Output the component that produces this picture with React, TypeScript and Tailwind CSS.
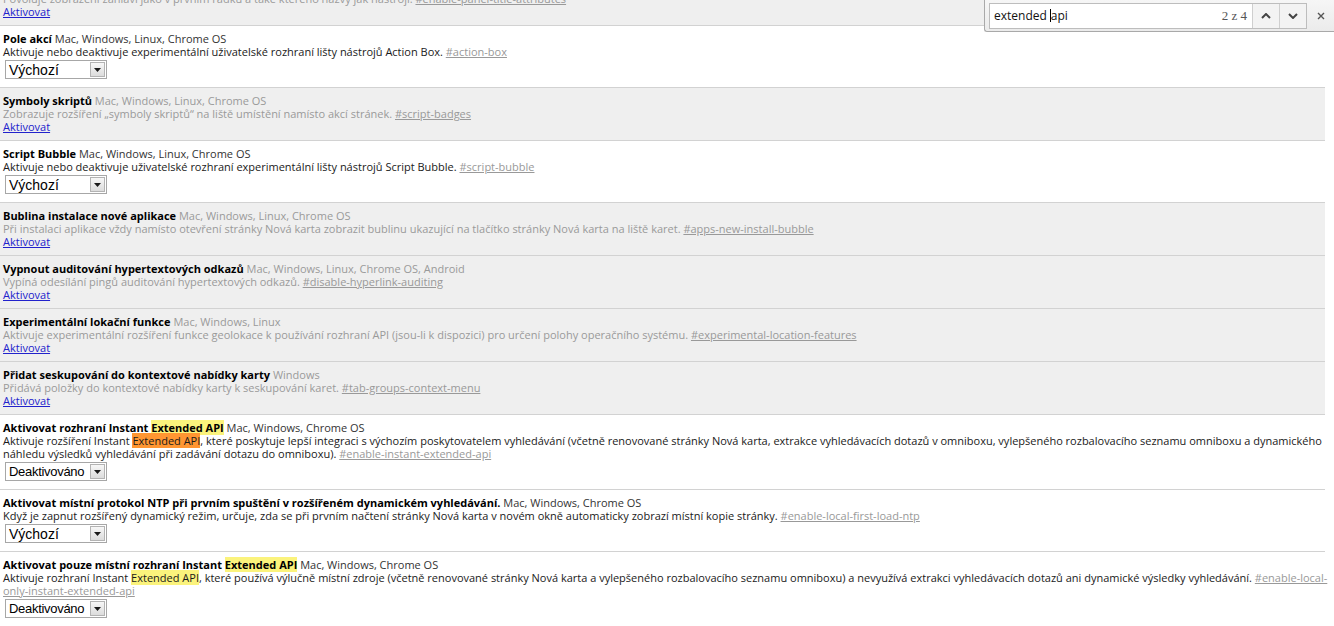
import type { ReactNode } from 'react';

type Flag = {
  title: ReactNode;
  platforms: string;
  desc: ReactNode;
  enabled: boolean;
  select?: string;
  nowrap?: boolean;
};

function Hl({ children, active }: { children: ReactNode; active?: boolean }) {
  return <span className={active ? 'bg-[#ff9632]' : 'bg-[#fbf37c]'}>{children}</span>;
}

function Hash({ children }: { children: ReactNode }) {
  return <span className="text-[#999] underline">{children}</span>;
}

function Select({ value, narrow }: { value: string; narrow?: boolean }) {
  return (
    <div className="ml-[2px] mt-[2px] mb-[2px] flex h-[19px] w-[102px] items-center border border-[#a7a7a7] bg-white">
      <span
        className={`flex-1 pl-[3px] leading-none text-black font-['Liberation_Sans',Arial,sans-serif] ${
          narrow ? 'text-[13px] tracking-[-0.3px]' : 'text-[14px]'
        }`}
      >
        {value}
      </span>
      <span className="mr-[1px] flex h-[15px] w-[15px] items-center justify-center border border-[#b3b3b3] bg-gradient-to-b from-[#f7f7f7] to-[#dcdcdc]">
        <svg width="7" height="4" viewBox="0 0 7 4">
          <path d="M0 0h7L3.5 4z" fill="#1a1a1a" />
        </svg>
      </span>
    </div>
  );
}

const flags: Flag[] = [
  {
    title: 'Pole akcí',
    platforms: 'Mac, Windows, Linux, Chrome OS',
    desc: (
      <>
        Aktivuje nebo deaktivuje experimentální uživatelské rozhraní lišty nástrojů Action Box.{' '}
        <Hash>#action-box</Hash>
      </>
    ),
    enabled: true,
    select: 'Výchozí',
  },
  {
    title: 'Symboly skriptů',
    platforms: 'Mac, Windows, Linux, Chrome OS',
    desc: (
      <>
        Zobrazuje rozšíření „symboly skriptů“ na liště umístění namísto akcí stránek. <Hash>#script-badges</Hash>
      </>
    ),
    enabled: false,
  },
  {
    title: 'Script Bubble',
    platforms: 'Mac, Windows, Linux, Chrome OS',
    desc: (
      <>
        Aktivuje nebo deaktivuje uživatelské rozhraní experimentální lišty nástrojů Script Bubble.{' '}
        <Hash>#script-bubble</Hash>
      </>
    ),
    enabled: true,
    select: 'Výchozí',
  },
  {
    title: 'Bublina instalace nové aplikace',
    platforms: 'Mac, Windows, Linux, Chrome OS',
    desc: (
      <>
        Při instalaci aplikace vždy namísto otevření stránky Nová karta zobrazit bublinu ukazující na tlačítko
        stránky Nová karta na liště karet. <Hash>#apps-new-install-bubble</Hash>
      </>
    ),
    enabled: false,
  },
  {
    title: 'Vypnout auditování hypertextových odkazů',
    platforms: 'Mac, Windows, Linux, Chrome OS, Android',
    desc: (
      <>
        Vypíná odesílání pingů auditování hypertextových odkazů. <Hash>#disable-hyperlink-auditing</Hash>
      </>
    ),
    enabled: false,
  },
  {
    title: 'Experimentální lokační funkce',
    platforms: 'Mac, Windows, Linux',
    desc: (
      <>
        Aktivuje experimentální rozšíření funkce geolokace k používání rozhraní API (jsou-li k dispozici) pro
        určení polohy operačního systému. <Hash>#experimental-location-features</Hash>
      </>
    ),
    enabled: false,
  },
  {
    title: 'Přidat seskupování do kontextové nabídky karty',
    platforms: 'Windows',
    desc: (
      <>
        Přidává položky do kontextové nabídky karty k seskupování karet. <Hash>#tab-groups-context-menu</Hash>
      </>
    ),
    enabled: false,
  },
  {
    title: (
      <>
        Aktivovat rozhraní Instant <Hl>Extended API</Hl>
      </>
    ),
    platforms: 'Mac, Windows, Chrome OS',
    desc: (
      <>
        Aktivuje rozšíření Instant <Hl active>Extended API</Hl>, které poskytuje lepší integraci s výchozím
        poskytovatelem vyhledávání (včetně renovované stránky Nová karta, extrakce vyhledávacích dotazů v
        omniboxu, vylepšeného rozbalovacího seznamu omniboxu a dynamického
        <br />
        náhledu výsledků vyhledávání při zadávání dotazu do omniboxu). <Hash>#enable-instant-extended-api</Hash>
      </>
    ),
    enabled: true,
    select: 'Deaktivováno',
    nowrap: true,
  },
  {
    title: 'Aktivovat místní protokol NTP při prvním spuštění v rozšířeném dynamickém vyhledávání.',
    platforms: 'Mac, Windows, Chrome OS',
    desc: (
      <>
        Když je zapnut rozšířený dynamický režim, určuje, zda se při prvním načtení stránky Nová karta v novém
        okně automaticky zobrazí místní kopie stránky. <Hash>#enable-local-first-load-ntp</Hash>
      </>
    ),
    enabled: true,
    select: 'Výchozí',
  },
  {
    title: (
      <>
        Aktivovat pouze místní rozhraní Instant <Hl>Extended API</Hl>
      </>
    ),
    platforms: 'Mac, Windows, Chrome OS',
    desc: (
      <>
        Aktivuje rozhraní Instant <Hl>Extended API</Hl>, které používá výlučně místní zdroje (včetně
        renovované stránky Nová karta a vylepšeného rozbalovacího seznamu omniboxu) a nevyužívá extrakci
        vyhledávacích dotazů ani dynamické výsledky vyhledávání. <Hash>#enable-local-</Hash>
        <br />
        <Hash>only-instant-extended-api</Hash>
      </>
    ),
    enabled: true,
    select: 'Deaktivováno',
    nowrap: true,
  },
];

function FlagRow({ flag }: { flag: Flag }) {
  return (
    <div
      className={`border-b border-[#d2d2d2] px-[3px] pt-[6px] ${
        flag.enabled ? 'bg-white pb-[6px]' : 'bg-[#efefef] pb-[7px]'
      }`}
    >
      <div className="whitespace-nowrap">
        <span className="font-bold text-black">{flag.title}</span>{' '}
        <span className={flag.enabled ? 'text-[#333]' : 'text-[#9a9a9a]'}>{flag.platforms}</span>
      </div>
      <div
        className={`${flag.enabled ? 'text-[#1a1a1a]' : 'text-[#9a9a9a]'} ${
          flag.nowrap ? 'whitespace-nowrap' : ''
        }`}
      >
        {flag.desc}
      </div>
      {flag.select ? (
        <Select value={flag.select} narrow={flag.select === 'Deaktivováno'} />
      ) : (
        <a className="text-[#2222cc] underline">Aktivovat</a>
      )}
    </div>
  );
}

function FindBar() {
  return (
    <div className="absolute right-0 top-0 flex h-[32px] w-[350px] items-center rounded-bl-[3px] border-b border-l border-[#a9a9a9] bg-gradient-to-b from-[#f6f6f6] to-[#ebebeb] pl-[4px]">
      <div className="flex h-[26px] w-[318px] items-stretch border border-[#bdbdbd] bg-white">
        <div className="flex flex-1 items-center pl-[4px] text-[12px] text-[#111]">
          <span>extended</span>
          <span className="ml-[3px] inline-block h-[13px] w-px bg-black" />
          <span>api</span>
          <span className="ml-auto pr-[5px] font-['Liberation_Serif',serif] text-[13px] text-[#555]">2 z 4</span>
        </div>
        <div className="flex w-[27px] items-center justify-center border-l border-[#cfcfcf] bg-[#f3f3f3]">
          <svg width="10" height="6" viewBox="0 0 10 6">
            <path d="M1 5l4-4 4 4" fill="none" stroke="#444" strokeWidth="2" />
          </svg>
        </div>
        <div className="flex w-[27px] items-center justify-center border-l border-[#cfcfcf] bg-[#f3f3f3]">
          <svg width="10" height="6" viewBox="0 0 10 6">
            <path d="M1 1l4 4 4-4" fill="none" stroke="#444" strokeWidth="2" />
          </svg>
        </div>
      </div>
      <div className="flex flex-1 items-center justify-center">
        <svg width="8" height="8" viewBox="0 0 8 8">
          <path d="M1 1l6 6M7 1l-6 6" stroke="#555" strokeWidth="1.4" />
        </svg>
      </div>
    </div>
  );
}

export default function App() {
  return (
    <div className="relative h-[626px] w-[1334px] overflow-hidden bg-white font-['Open_Sans',sans-serif] text-[11px] leading-[13px]">
      <div className="w-[1325px]">
        {/* row cut off by the top of the window */}
        <div className="h-[26px] overflow-hidden border-b border-[#d2d2d2] bg-[#efefef] px-[3px]">
          <div className="mt-[-8px] whitespace-nowrap text-[#9a9a9a]">
            Povoluje zobrazení záhlaví jako v prvním řádku a také kterého nazvy jak nástroji.{' '}
            <Hash>#enable-panel-title-attributes</Hash>
          </div>
          <a className="text-[#2222cc] underline">Aktivovat</a>
        </div>
        {flags.map((f, i) => (
          <FlagRow key={i} flag={f} />
        ))}
      </div>
      <FindBar />
    </div>
  );
}
